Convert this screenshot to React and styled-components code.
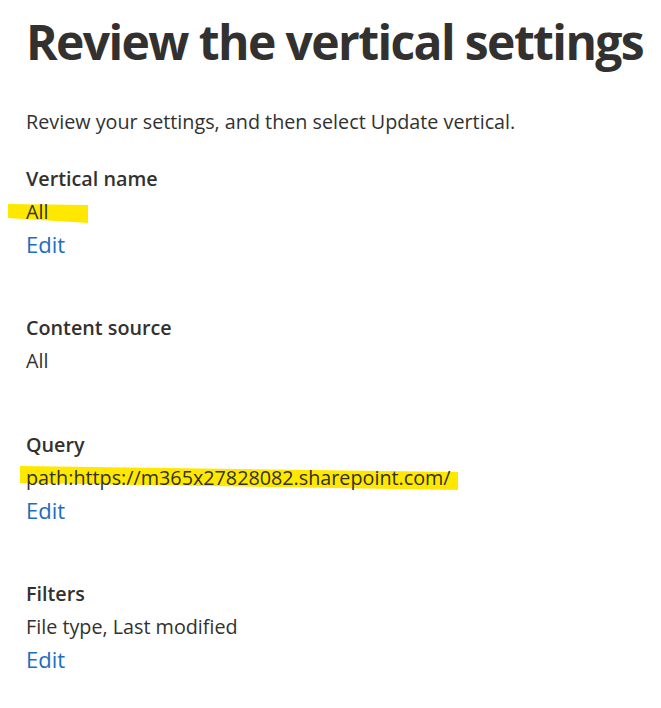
import React from "react";
import styled, { createGlobalStyle } from "styled-components";

const Global = createGlobalStyle`
  html, body { margin: 0; padding: 0; background: #ffffff; }
  body { font-family: "Open Sans", "Noto Sans", sans-serif; color: #323130; }
`;

const Page = styled.main`
  display: flex;
  flex-direction: column;
  padding: 12px 26px 0 26px;
`;

const Title = styled.h1`
  margin: 0;
  font-size: 48px;
  line-height: 60px;
  font-weight: 700;
  letter-spacing: -1.6px;
  color: #323130;
  white-space: nowrap;
`;

const Intro = styled.p`
  margin: 34px 0 0 0;
  font-size: 19.75px;
  line-height: 32px;
  color: #323130;
`;

const Sections = styled.div`
  display: flex;
  flex-direction: column;
  gap: 50px;
  margin-top: 23px;
`;

const Section = styled.section`
  display: flex;
  flex-direction: column;
`;

const Label = styled.h2`
  margin: 0;
  font-size: 19.75px;
  line-height: 35px;
  font-weight: 600;
  color: #323130;
`;

const Value = styled.div`
  position: relative;
  isolation: isolate;
  font-size: 19.75px;
  line-height: 32px;
  color: #323130;
  white-space: nowrap;
`;

const Marker = styled.svg`
  position: absolute;
  left: ${(p) => p.$left}px;
  top: ${(p) => p.$top}px;
  z-index: -1;
  overflow: visible;
`;

const EditLink = styled.a`
  font-size: 22px;
  line-height: 32px;
  color: #1b6ec2;
  text-decoration: none;
  cursor: pointer;
  align-self: flex-start;
`;

const Highlight = ({ left, top, w, h, points }) => (
  <Marker $left={left} $top={top} width={w} height={h} viewBox={`0 0 ${w} ${h}`}>
    <polygon points={points} fill="#ffe800" />
  </Marker>
);

const sections = [
  {
    label: "Vertical name",
    value: "All",
    edit: true,
    mark: { left: -18, top: 8, w: 80, h: 19, points: "0,0 80,1 80,19 0,14" },
  },
  { label: "Content source", value: "All", edit: false },
  {
    label: "Query",
    value: "path:https://m365x27828082.sharepoint.com/",
    edit: true,
    mark: { left: -6, top: 4, w: 438, h: 24, points: "0,0 438,6 438,24 0,17" },
  },
  { label: "Filters", value: "File type, Last modified", edit: true },
];

export default function App() {
  return (
    <>
      <Global />
      <Page>
        <Title>Review the vertical settings</Title>
        <Intro>Review your settings, and then select Update vertical.</Intro>
        <Sections>
          {sections.map((s) => (
            <Section key={s.label}>
              <Label>{s.label}</Label>
              <Value>
                {s.mark && <Highlight {...s.mark} />}
                {s.value}
              </Value>
              {s.edit && <EditLink href="#">Edit</EditLink>}
            </Section>
          ))}
        </Sections>
      </Page>
    </>
  );
}
